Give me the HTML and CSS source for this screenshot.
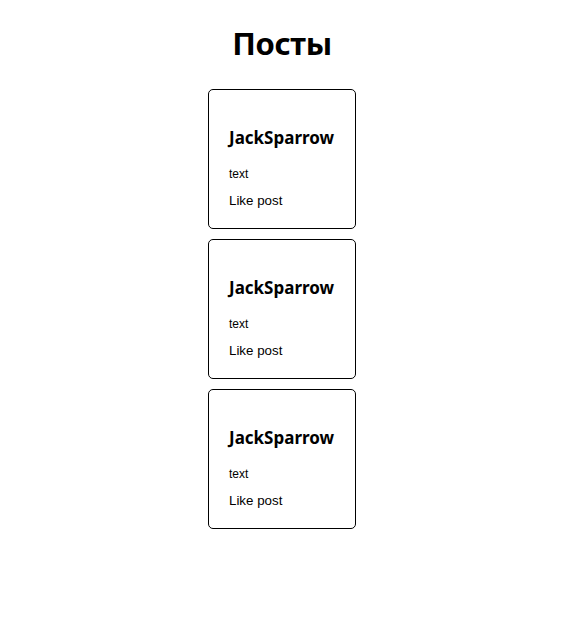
FILE: index.html
```html
<!doctype html>
<html>
	<head>
		<meta charset="utf-8">
		<title>Посты</title>
		<link rel="stylesheet" href="styles.css">
	</head>
	<body>
		<div class="app">
			<h1>Посты</h1>
			<div class="posts">
				<div class="post">
					<h3>JackSparrow</h3>
					<p>text</p>
					<button class="like">Like post</button>
				</div>
				<div class="post">
					<h3>JackSparrow</h3>
					<p>text</p>
					<button class="like">Like post</button>
				</div>
				<div class="post">
					<h3>JackSparrow</h3>
					<p>text</p>
					<button class="like">Like post</button>
				</div>
			</div>
		</div>
	</body>
</html>
```

FILE: styles.css
```css
body {
	margin: 8px;
	font-family: "Noto Sans", sans-serif;
	color: #000;
	background: #fff;
}

.app {
	display: flex;
	flex-direction: column;
	align-items: center;
	margin-right: 4px;
}

h1 {
	font-size: 31px;
	font-weight: bold;
	margin: 14px 0 25px;
	letter-spacing: -0.3px;
}

.posts {
	display: flex;
	flex-direction: column;
	gap: 10px;
}

.post {
	width: 106px;
	padding: 21px 20px 18px;
	border: 1px solid #000;
	border-radius: 5px;
}

.post h3 {
	font-size: 17px;
	margin: 15px 0 18px;
}

.post p {
	font-family: "Liberation Sans", Arial, sans-serif;
	font-size: 12px;
	margin: 0 0 7px;
}

.like {
	font-family: "Liberation Sans", Arial, sans-serif;
	font-size: 13.33px;
	background: none;
	border: none;
	padding: 0;
	color: #000;
	cursor: pointer;
}
```
